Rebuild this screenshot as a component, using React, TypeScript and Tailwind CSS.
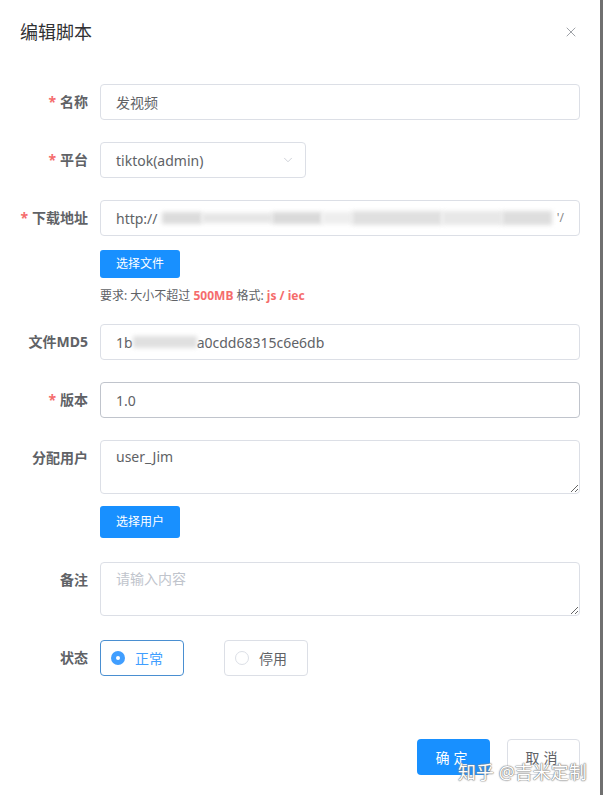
import React from "react";
import { X, ChevronDown } from "lucide-react";

const font = "font-['Noto_Sans','Noto_Sans_CJK_SC',sans-serif]";

function Label({ text, required }: { text: string; required?: boolean }) {
  return (
    <div className="w-[80px] shrink-0 pr-3 text-right text-[14px] leading-9 font-bold text-[#606266]">
      {required && <span className="mr-1 text-[#f56c6c]">*</span>}
      {text}
    </div>
  );
}

export default function App() {
  return (
    <div className={`flex h-[795px] w-[603px] overflow-hidden bg-white ${font}`}>
      <div className="relative flex w-[600px] flex-col bg-white">
        {/* header */}
        <div className="flex items-center justify-between px-5 pt-5">
          <div className="text-[18px] leading-6 text-[#303133]">编辑脚本</div>
          <X size={16} strokeWidth={1.3} className="mr-[1px] text-[#909399]" />
        </div>

        {/* form */}
        <div className="mt-10 flex flex-col px-5">
          {/* 名称 */}
          <div className="mb-[22px] flex">
            <Label text="名称" required />
            <div className="flex h-9 flex-1 items-center rounded border border-[#dcdfe6] px-[15px] text-[14px] text-[#606266]">
              发视频
            </div>
          </div>

          {/* 平台 */}
          <div className="mb-[22px] flex">
            <Label text="平台" required />
            <div className="flex h-9 w-[206px] items-center justify-between rounded border border-[#dcdfe6] pl-[15px] pr-[10px] text-[14px] text-[#606266]">
              <span>tiktok(admin)</span>
              <ChevronDown size={14} strokeWidth={1.3} className="text-[#c0c4cc]" />
            </div>
          </div>

          {/* 下载地址 */}
          <div className="mb-[20px] flex">
            <Label text="下载地址" required />
            <div className="flex flex-1 flex-col items-start">
              <div className="flex h-9 w-full items-center overflow-hidden rounded border border-[#dcdfe6] px-[15px] text-[14px] text-[#606266]">
                <span>http://</span>
                <div className="ml-1 flex flex-1 items-center gap-0">
                  <div className="h-[12px] w-[40px] bg-[#dcdcdc] blur-[2px]" />
                  <div className="h-[10px] w-[70px] bg-[#e6e6e6] blur-[2px]" />
                  <div className="h-[12px] w-[50px] bg-[#dadada] blur-[2px]" />
                  <div className="h-[12px] w-[30px] bg-[#eeeeee] blur-[2px]" />
                  <div className="h-[14px] w-[90px] bg-[#e0e0e0] blur-[2px]" />
                  <div className="h-[14px] w-[60px] bg-[#e8e8e8] blur-[2px]" />
                  <div className="h-[14px] w-[50px] bg-[#dedede] blur-[2px]" />
                </div>
                <span className="ml-1 text-[12px] text-[#888]">'/</span>
              </div>
              <button className="mt-[14px] h-7 w-[80px] rounded-[3px] bg-[#1890ff] text-[12px] text-white">
                选择文件
              </button>
              <div className="mt-[10px] text-[12px] leading-4 text-[#606266]">
                要求: 大小不超过 <span className="font-bold text-[#f56c6c]">500MB</span> 格式:{" "}
                <span className="font-bold text-[#f56c6c]">js / iec</span>
              </div>
            </div>
          </div>

          {/* 文件MD5 */}
          <div className="mb-[22px] flex">
            <Label text="文件MD5" />
            <div className="flex h-9 flex-1 items-center rounded border border-[#dcdfe6] px-[15px] text-[14px] text-[#606266]">
              <span>1b</span>
              <div className="h-[12px] w-[64px] bg-[#e0e0e0] blur-[2px]" />
              <span>a0cdd68315c6e6db</span>
            </div>
          </div>

          {/* 版本 */}
          <div className="mb-[22px] flex">
            <Label text="版本" required />
            <div className="flex h-9 flex-1 items-center rounded border border-[#c0c4cc] px-[15px] text-[14px] text-[#606266]">
              1.0
            </div>
          </div>

          {/* 分配用户 */}
          <div className="mb-[24px] flex">
            <Label text="分配用户" />
            <div className="flex flex-1 flex-col items-start">
              <textarea
                readOnly
                value="user_Jim"
                className="h-[54px] w-full rounded border border-[#dcdfe6] px-[15px] py-[5px] text-[14px] leading-[21px] text-[#606266] outline-none"
              />
              <button className="mt-3 h-8 w-[80px] rounded-[3px] bg-[#1890ff] text-[12px] text-white">
                选择用户
              </button>
            </div>
          </div>

          {/* 备注 */}
          <div className="mb-[24px] flex">
            <Label text="备注" />
            <textarea
              readOnly
              placeholder="请输入内容"
              className="h-[54px] flex-1 rounded border border-[#dcdfe6] px-[15px] py-[5px] text-[14px] leading-[21px] text-[#606266] outline-none placeholder:text-[#c0c4cc]"
            />
          </div>

          {/* 状态 */}
          <div className="flex">
            <Label text="状态" />
            <div className="flex gap-[40px]">
              <div className="flex h-9 w-[84px] items-center rounded border border-[#4a8fd1] pl-[10px]">
                <span className="flex h-[14px] w-[14px] items-center justify-center rounded-full bg-[#409eff]">
                  <span className="h-[4px] w-[4px] rounded-full bg-white" />
                </span>
                <span className="ml-[10px] text-[14px] text-[#409eff]">正常</span>
              </div>
              <div className="flex h-9 w-[84px] items-center rounded border border-[#dcdfe6] pl-[10px]">
                <span className="h-[14px] w-[14px] rounded-full border border-[#dcdfe6]" />
                <span className="ml-[10px] text-[14px] text-[#606266]">停用</span>
              </div>
            </div>
          </div>
        </div>

        {/* footer */}
        <div className="mt-auto mb-[20px] flex justify-end gap-[17px] px-5">
          <button className="h-9 w-[73px] rounded bg-[#1890ff] text-[14px] tracking-[4px] text-white">
            确定
          </button>
          <button className="h-9 w-[73px] rounded border border-[#dcdfe6] bg-white text-[14px] tracking-[4px] text-[#606266]">
            取消
          </button>
        </div>

        {/* watermark */}
        <div className="absolute left-[458px] top-[759px] whitespace-nowrap text-[18px] text-white [text-shadow:0_0_1px_#777,0_0_1px_#777,0_0_2px_#999]">
          知乎 @吉米定制
        </div>
      </div>
      <div className="w-[3px] bg-[#707070]" />
    </div>
  );
}
